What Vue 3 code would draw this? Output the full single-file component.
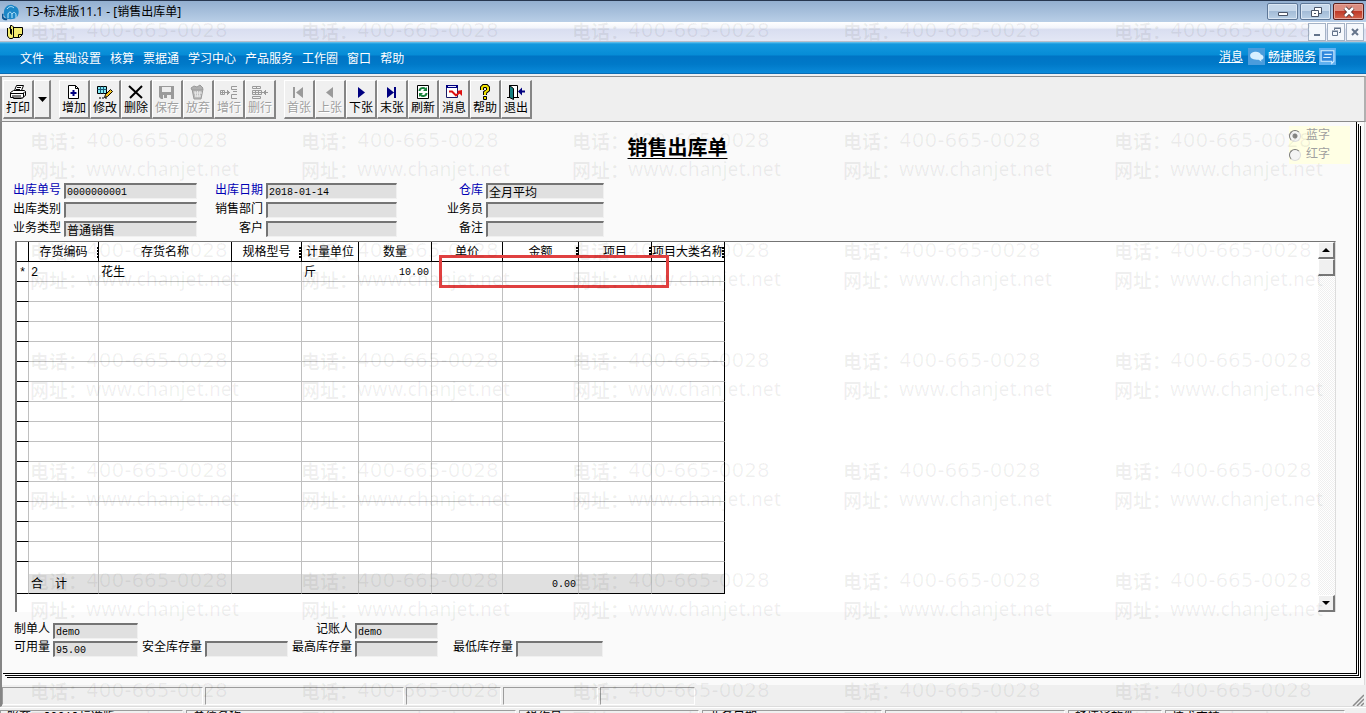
<script setup>
const menus = ['文件', '基础设置', '核算', '票据通', '学习中心', '产品服务', '工作圈', '窗口', '帮助']

const NAVY = '#000080'
const GRAY = '#9a9a9a'

const editTools = [
  { label: '增加', shapes: [
    { d: 'M3.5 1.5h7l3 3v10h-10z', fill: '#fff', stroke: '#000' },
    { d: 'M10.5 1.5v3h3', stroke: '#000' },
    { d: 'M8.5 6v6M5.5 9h6', stroke: NAVY, w: 2 }] },
  { label: '修改', shapes: [
    { d: 'M1.5 2.5h9v7h-9z', fill: '#7fe8f4', stroke: '#000' },
    { d: 'M1.5 5.5h9M4.5 2.5v7M7.5 2.5v7', stroke: '#1a5a78' },
    { d: 'M14.5 5.5l2 2-5 5-3 1 1-3z', fill: '#f0c020', stroke: '#000' },
    { d: 'M3 14h2M6 14h2M9 14h2', stroke: '#000' }] },
  { label: '删除', shapes: [
    { d: 'M2 2l13 12', stroke: '#000', w: 2 },
    { d: 'M15 2L3 14', stroke: '#000', w: 2 }] },
  { label: '保存', off: true, shapes: [
    { d: 'M1 2h15v13H3l-2-2z', fill: GRAY },
    { d: 'M4 3h9v5H4z', fill: '#ededed' },
    { d: 'M5 11h8v4H5z', fill: '#ededed' },
    { d: 'M6 11h3v3H6z', fill: GRAY }] },
  { label: '放弃', off: true, shapes: [
    { d: 'M3 5h11l-2 10H5z', fill: '#bcbcbc', stroke: GRAY },
    { d: 'M2 4l3-2 3 1 3-2 3 3-1 2H3z', fill: '#b0b0b0', stroke: GRAY },
    { d: 'M6 7l1 6M11 7l-1 6M8.5 7v6M5 9h8M6 12h6', stroke: '#e8e8e8' }] },
  { label: '增行', off: true, shapes: [
    { d: 'M.5 6.5h4v4h-4zM.5 8.5h4M2.5 6.5v4', stroke: GRAY },
    { d: 'M5 8.5h5M7.5 6v5M8.5 7v3', stroke: GRAY },
    { d: 'M17 2.5h-5.500v3h5.500M17 7.500h-4M17 10.500h-5.500v4h5.500', stroke: GRAY }] },
  { label: '删行', off: true, shapes: [
    { d: 'M1.500 2.500h8v2h-8zM5.500 2.500v2', stroke: GRAY },
    { d: 'M1.500 6.500h9v4h-9zM1.500 8.500h9M4.500 6.500v4M7.500 6.500v4', stroke: GRAY },
    { d: 'M1.500 12.500h8v2h-8z', stroke: GRAY },
    { d: 'M11 8.500h6M14.500 6v5M13.500 7v3', stroke: GRAY }] }
]

const navTools = [
  { label: '首张', off: true, shapes: [{ d: 'M3 3h2v11H3zM13 3v11L6 8.500z', fill: GRAY }] },
  { label: '上张', off: true, shapes: [{ d: 'M12 3v11L5 8.500z', fill: GRAY }] },
  { label: '下张', shapes: [{ d: 'M6 3v11l7-5.500z', fill: NAVY }] },
  { label: '末张', shapes: [{ d: 'M4 3v11l7-5.500zM11 3h2v11h-2z', fill: NAVY }] },
  { label: '刷新', shapes: [
    { d: 'M3.500 1.500h11v13h-11z', fill: '#fff', stroke: '#000' },
    { d: 'M5.500 7c0-3 4-4 6-2M12.500 9c0 3-4 4-6 2', stroke: '#16803a', w: 2 },
    { d: 'M13 3v4H9zM5 13V9h4z', fill: '#16803a' }] },
  { label: '消息', shapes: [
    { d: 'M1.500 1.500h11v12h-11z', fill: '#fff', stroke: '#1a1a66' },
    { d: 'M1 1h12v3H1z', fill: NAVY },
    { d: 'M3 2h8v1H3z', fill: '#e8e8ff' },
    { d: 'M4 7.500h3l4 4 4-3.500', stroke: '#dd1111', w: 2 },
    { d: 'M17 6v6l-5-5z', fill: '#dd1111' }] },
  { label: '帮助', shapes: [
    { d: 'M6 6V3.500l1.500-1.500h3L12 3.500V6L9 8.500V11', stroke: '#000', w: 4 },
    { d: 'M6 6V3.500l1.500-1.500h3L12 3.500V6L9 8.500V11', stroke: '#f0e000', w: 2 },
    { d: 'M7.500 12.500h3v3h-3z', fill: '#f0e000', stroke: '#000' }] },
  { label: '退出', shapes: [
    { d: 'M2.500 1.500h8v12h-8z', fill: '#fff', stroke: '#000' },
    { d: 'M2.500 1.500l4 3v11l-4-2z', fill: '#158080', stroke: '#000' },
    { d: 'M0 13.500h3M7 13.500h5', stroke: '#000' },
    { d: 'M13 7.500h5', stroke: NAVY, w: 2 },
    { d: 'M11 7.500l4-4v8z', fill: NAVY }] }
]

const headFields = [
  { id: 'billNo', label: '出库单号', value: '0000000001', key: true },
  { id: 'billDate', label: '出库日期', value: '2018-01-14', key: true },
  { id: 'store', label: '仓库', value: '全月平均', key: true, cjk: true },
  { id: 'category', label: '出库类别', value: '' },
  { id: 'dept', label: '销售部门', value: '' },
  { id: 'clerk', label: '业务员', value: '' },
  { id: 'bizType', label: '业务类型', value: '普通销售', cjk: true },
  { id: 'customer', label: '客户', value: '' },
  { id: 'remark', label: '备注', value: '' }
]

const footFields = [
  { id: 'maker', label: '制单人', value: 'demo' },
  { id: 'booker', label: '记账人', value: 'demo', skip: true },
  { id: 'available', label: '可用量', value: '95.00', start: true },
  { id: 'safe', label: '安全库存量', value: '' },
  { id: 'highest', label: '最高库存量', value: '' },
  { id: 'lowest', label: '最低库存量', value: '' }
]

const columns = [
  { name: '', cls: 'c-mark' },
  { name: '存货编码', cls: 'c-code', cut: true },
  { name: '存货名称', cls: 'c-name' },
  { name: '规格型号', cls: 'c-spec', cut: true },
  { name: '计量单位', cls: 'c-unit' },
  { name: '数量', cls: 'c-qty' },
  { name: '单价', cls: 'c-price' },
  { name: '金额', cls: 'c-sum', cut: true },
  { name: '项目', cls: 'c-item', cut: true },
  { name: '项目大类名称', cls: 'c-group', cut: true }
]
const firstRow = ['*', '2', '花生', '', '斤', '10.00', '', '', '', '']
const totalRow = ['', '合　计', '', '', '', '', '', '0.00', '', '']
const rows = [firstRow, ...Array.from({ length: 14 }, () => Array(10).fill(''))]

const statusCells = ['s1', 's2', 's3', 's3', 's3']
const taskCells = [
  { cls: 't1', text: '账套：[001]标准版' },
  { cls: 't2', text: '单位名称：' },
  { cls: 't3', text: '操作员：' },
  { cls: 't3', text: '业务日期' },
  { cls: 't3', text: '' },
  { cls: 't4', text: '畅捷通软件' },
  { cls: 't3', text: '技术支持' }
]
</script>

<template>
  <div class="app">
    <header class="titlebar">
      <svg class="logo" viewBox="0 0 18 18">
        <path d="M2 9C2 3 9 0 12 3c5 1 6 7 3 11-3 3-10 3-12 0-1-2-2-3-1-5z" fill="#1b86c6" />
        <path d="M5 6c2-3 5-3 7-1M6 15v-4c1-3 4-2 4 1v3M10 11c2-3 4-1 4 1v3" fill="none" stroke="#bfeaff" />
        <path d="M1 11c-2 3 1 6 4 5" fill="none" stroke="#0b5591" stroke-width="2" />
      </svg>
      <h1>T3-标准版11.1 - [销售出库单]</h1>
      <div class="winbtns">
        <button type="button" aria-label="最小化">
          <svg viewBox="0 0 14 12"><path d="M2.500 6.500h9v3h-9z" fill="#fff" stroke="#4a5568" /></svg>
        </button>
        <button type="button" aria-label="还原">
          <svg viewBox="0 0 14 12"><path d="M5.500 1.500h7v6h-7z" fill="#fff" stroke="#4a5568" /><path d="M2.500 4.500h7v6h-7z" fill="#fff" stroke="#4a5568" /><path d="M5 7h2v1H5z" fill="#4a5568" /></svg>
        </button>
        <button type="button" class="close" aria-label="关闭">
          <svg viewBox="0 0 14 12"><path d="M3 2l8 8M11 2l-8 8" stroke="#4a2a2a" stroke-width="4" /><path d="M3 2l8 8M11 2l-8 8" stroke="#fff" stroke-width="2.500" /></svg>
        </button>
      </div>
    </header>

    <div class="mdibar">
      <svg class="note" viewBox="0 0 16 16">
        <path d="M2.500 3.500h13v7l-3 3h-10z" fill="#f4ec70" stroke="#000" />
        <path d="M15 10.500h-3.500v3" fill="none" stroke="#000" />
        <path d="M.500 4v8l2 2.500h3l1-1.500V3L5 1.500H3.500v8l1 1V5" fill="#f4ec70" stroke="#000" />
      </svg>
      <div class="mdibtns">
        <button type="button" aria-label="最小化窗口"><svg viewBox="0 0 12 12"><path d="M3 9h6" stroke="#64748b" stroke-width="2" /></svg></button>
        <button type="button" aria-label="还原窗口"><svg viewBox="0 0 12 12"><path d="M4.500 4V2.500h6v4H9M2.500 5.500h5v4h-5zM2 5h6M4 2h7" fill="none" stroke="#64748b" /></svg></button>
        <button type="button" aria-label="关闭窗口"><svg viewBox="0 0 12 12"><path d="M3 3l6 6M9 3l-6 6" stroke="#64748b" stroke-width="2" /></svg></button>
      </div>
    </div>

    <nav class="menubar">
      <div class="menus">
        <button v-for="m in menus" :key="m" type="button">{{ m }}</button>
      </div>
      <div class="links">
        <a href="#">消息</a>
        <svg viewBox="0 0 16 16"><path d="M0 0h16v16H0z" fill="#4a9cdc" /><path d="M2 7c0-4 9-5 10-1 4 1 3 5 0 5l1 2-3-2c-5 0-8-1-8-4z" fill="#d8efff" /></svg>
        <a href="#">畅捷服务</a>
        <svg viewBox="0 0 16 16"><path d="M0 0h16v16H0z" fill="#5fb0f0" /><path d="M2 2.500h12v10l-2 2v-2H2z" fill="#2f86dc" stroke="#d8efff" /><path d="M5 6h7M4 9h7" stroke="#d8efff" /></svg>
      </div>
    </nav>

    <div class="toolbar">
      <div class="group">
        <button type="button" class="tool">
          <svg viewBox="0 0 18 16">
            <path d="M5.500 6.500l2-5h7l-2 5" fill="#fff" stroke="#000" />
            <path d="M8 3.500h4M7 5.500h4" stroke="#000" />
            <path d="M1.500 8.500l3-2h11l1 1v4l-3 2h-12z" fill="#fff" stroke="#000" />
            <path d="M2 9.500h12l2-2M14.500 9v4M3 12h9" fill="none" stroke="#000" />
            <path d="M4.500 13.500v1h8l2-1" fill="#fff" stroke="#000" />
          </svg>
          <span>打印</span>
        </button>
        <button type="button" class="drop" aria-label="打印选项">
          <svg viewBox="0 0 9 5"><path d="M0 0h9L4.500 5z" fill="#000" /></svg>
        </button>
      </div>
      <div v-for="(g, gi) in [editTools, navTools]" :key="gi" class="group">
        <button v-for="t in g" :key="t.label" type="button" class="tool" :disabled="t.off">
          <svg viewBox="0 0 18 16">
            <path v-for="(s, i) in t.shapes" :key="i" :d="s.d" :fill="s.fill || 'none'" :stroke="s.stroke || 'none'" :stroke-width="s.w || 1" />
          </svg>
          <span>{{ t.label }}</span>
        </button>
      </div>
    </div>

    <main class="desk">
      <section class="paper">
        <div class="heading">
          <h2>销售出库单</h2>
          <fieldset class="colors" disabled>
            <label><input type="radio" name="ink" checked />蓝字</label>
            <label><input type="radio" name="ink" />红字</label>
          </fieldset>
        </div>

        <div class="fields head">
          <template v-for="f in headFields" :key="f.id">
            <label :for="f.id" :class="{ key: f.key }">{{ f.label }}</label>
            <input :id="f.id" type="text" :value="f.value" :class="{ cjk: f.cjk }" readonly />
          </template>
        </div>

        <div class="gridbox">
          <div class="sheet">
            <table>
              <colgroup><col v-for="c in columns" :key="c.cls" :class="c.cls" /></colgroup>
              <thead>
                <tr><th v-for="c in columns" :key="c.cls" :class="{ cut: c.cut }"><span>{{ c.name }}</span></th></tr>
              </thead>
              <tbody>
                <tr v-for="(r, ri) in rows" :key="ri">
                  <td v-for="(v, ci) in r" :key="ci" :class="{ num: ci === 5, mark: ci === 0 }">{{ v }}</td>
                </tr>
                <tr class="rest"><td v-for="c in columns" :key="c.cls"></td></tr>
              </tbody>
              <tfoot>
                <tr><td v-for="(v, ci) in totalRow" :key="ci" :class="{ num: ci === 7 }">{{ v }}</td></tr>
              </tfoot>
            </table>
            <div class="callout"></div>
          </div>
          <div class="scroll">
            <button type="button" aria-label="向上"><svg viewBox="0 0 8 4"><path d="M0 4h8L4 0z" /></svg></button>
            <div class="thumb"></div>
            <button type="button" class="down" aria-label="向下"><svg viewBox="0 0 8 4"><path d="M0 0h8L4 4z" /></svg></button>
          </div>
        </div>

        <div class="fields foot">
          <template v-for="f in footFields" :key="f.id">
            <label :for="f.id" :class="{ skip: f.skip, start: f.start }">{{ f.label }}</label>
            <input :id="f.id" type="text" :value="f.value" readonly />
          </template>
        </div>
      </section>
    </main>

    <div class="status">
      <div v-for="(s, i) in statusCells" :key="i" class="cell" :class="s"></div>
      <svg class="grip" viewBox="0 0 12 12"><path d="M1 12L12 1M5 12l7-7M9 12l3-3" stroke="#8a8a8a" stroke-width="1.500" /></svg>
    </div>
    <footer class="task">
      <div v-for="(t, i) in taskCells" :key="i" class="cell" :class="t.cls">{{ t.text }}</div>
    </footer>

    <div class="marks" aria-hidden="true">
      <div v-for="n in 35" :key="n" class="stamp">
        <p><span>电话：</span><b class="tel">400-665-0028</b></p>
        <p><span>网址：</span><b>www.chanjet.net</b></p>
      </div>
    </div>
  </div>
</template>

<style>
body { margin: 0; overflow: hidden; background: #f0f0f0; }
</style>

<style scoped>
* { box-sizing: border-box; }
.app {
  position: relative;
  height: 100vh;
  overflow: hidden;
  display: flex;
  flex-direction: column;
  background: #f0f0f0;
  color: #000;
  font: 12px/14px "Liberation Mono", "Noto Sans CJK SC", sans-serif;
}
.app > * { flex: none; }
button { font: inherit; padding: 0; margin: 0; border: 0; background: none; color: inherit; }
svg { display: block; }

.titlebar {
  display: flex;
  align-items: center;
  height: 22px;
  padding: 0 2px;
  border-top: 1px solid #26364f;
  background: linear-gradient(#93afd0, #b9cfe7);
}
.logo { width: 18px; height: 18px; }
.titlebar h1 { margin: 0 auto 0 6px; font: 12px/18px "Noto Sans", "Noto Sans CJK SC", sans-serif; }
.winbtns, .mdibtns { display: flex; gap: 2px; }
.winbtns button {
  width: 31px;
  height: 17px;
  display: grid;
  place-items: center;
  border: 1px solid #5d7797;
  border-radius: 2px;
  box-shadow: inset 0 0 0 1px #dbe7f4;
  background: linear-gradient(#c5d7ea 50%, #a3bcd7 50%, #bad0e6);
}
.winbtns svg { width: 14px; height: 12px; }
.winbtns .close { border-color: #5a1f1c; box-shadow: inset 0 0 0 1px #e6a79c; background: linear-gradient(#dc8d80 50%, #bf3a28 50%, #d4644c); }

.mdibar {
  display: flex;
  align-items: center;
  justify-content: space-between;
  height: 20px;
  padding: 0 2px 0 7px;
  border-bottom: 1px solid #b9bfcb;
  background: linear-gradient(#fff, #f3f5fb 30%, #d9def0 40%, #e3e7f5);
}
.note { width: 16px; height: 16px; }
.mdibtns { gap: 1px; }
.mdibtns button { width: 18px; height: 18px; display: grid; place-items: center; border: 1px solid #a5b3c6; background: #f5f8fc; }
.mdibtns svg { width: 12px; height: 12px; }

.menubar {
  position: relative;
  z-index: 1;
  display: flex;
  justify-content: space-between;
  height: 32px;
  padding: 0 30px 0 20px;
  border-bottom: 1px solid #0a6cb5;
  background: linear-gradient(#6ec6ee 0, #1398de 2px, #068cd6 13px, #0074c4 14px, #0079c8 22px, #0a8ad9);
  color: #fff;
}
.menus { display: flex; gap: 9px; padding-top: 5px; }
.links { display: flex; align-items: center; gap: 3px; padding-bottom: 2px; }
.links a { color: #fff; padding-top: 2px; }
.links svg { width: 17px; height: 17px; }
.links svg:first-of-type { margin-left: 2px; }

.toolbar {
  display: flex;
  gap: 8px;
  height: 46px;
  margin-top: 2px;
  padding: 3px 1px 2px;
  border: solid #8b8b8b;
  border-width: 1px 2px 1px 2px;
  border-right-color: #b0b0b0;
  background: #efefef;
}
.group { display: flex; }
.tool, .drop {
  width: 31px;
  height: 39px;
  border: solid;
  border-width: 1px 2px 2px 1px;
  border-color: #fff #858585 #858585 #fff;
  background: #f0f0f0;
}
.tool { display: flex; flex-direction: column; align-items: center; gap: 1px; padding-top: 3px; }
.tool svg { width: 18px; height: 16px; }
.tool span { line-height: 16px; white-space: nowrap; }
.tool:disabled { color: #a0a0a0; text-shadow: 1px 1px #fff; }
.drop { width: 17px; display: grid; place-items: center; }
.drop svg { width: 9px; height: 5px; }

.desk { border-left: 2px solid #858585; padding: 0 7px 11px 1px; background: #fafafa; border-right: 1px solid #dcdcdc; margin-right: 1px; }
.paper {
  padding-bottom: 14px;
  border: solid #000;
  border-width: 0 1px 1px 0;
  background: #fafafa;
  box-shadow: 1px 1px #fff, 2px 2px #000, 3px 3px #fff, 4px 4px #000;
}
.heading { display: grid; grid-template-columns: 1fr auto 1fr; padding: 4px 6px 0 2px; }
.heading h2 { grid-column: 2; align-self: end; margin: 0; font: bold 20px/24px "Noto Sans CJK SC", sans-serif; text-decoration: underline; text-decoration-thickness: 1px; text-underline-offset: 3px; padding-bottom: 5px; }
.colors { justify-self: end; width: 61px; margin: 0; padding: 0; border: 0; background: #ffffe4; color: #a0a0a0; }
.colors label { display: flex; align-items: center; gap: 5px; height: 19px; }
.colors input {
  appearance: none;
  width: 12px;
  height: 12px;
  margin: 0;
  border: 1px solid;
  border-color: #777 #ddd #ddd #777;
  border-radius: 50%;
  background: #f4f4f4;
}
.colors input:checked { background: radial-gradient(circle, #888 2px, #f4f4f4 3px); }

.fields { display: grid; column-gap: 3px; }
.fields label { text-align: right; line-height: 14px; white-space: nowrap; }
.fields .key { color: #0000b4; }
.fields input {
  width: 100%;
  height: 16px;
  min-width: 0;
  padding: 1px 0 0 1px;
  border: solid;
  border-width: 2px 1px 1px 2px;
  border-color: #747474 #f0f0f0 #f0f0f0 #747474;
  border-radius: 0;
  background: #e0e0e0;
  color: #000;
  font: 10px/12px "Liberation Mono", "Noto Sans CJK SC", monospace;
  outline: 0;
}
.fields input.cjk { padding-top: 0; font-size: 12px; }
.head { grid-template-columns: 48px 133px 63px 131px 83px 118px; grid-auto-rows: 19px; padding: 19px 0 0 10px; }
.head label { padding-top: 1px; }
.foot { grid-template-columns: 36px 85px 61px 83px 61px 83px 72px 87px; grid-auto-rows: 18px; padding: 11px 0 0 11px; }
.foot .skip { grid-column: 5; }
.foot .start { grid-column: 1; }

.gridbox {
  display: flex;
  justify-content: space-between;
  height: 371px;
  margin: 1px 20px 0 12px;
  border: solid #747474;
  border-width: 1px 0 0 2px;
  border-right: 1px solid #ddd;
  background: #fff;
}
.sheet { position: relative; }
table { width: 708px; table-layout: fixed; border-collapse: separate; border-spacing: 0; }
.c-mark { width: 12px; }
.c-code, .c-spec { width: 70px; }
.c-name { width: 133px; }
.c-unit { width: 57px; }
.c-qty, .c-item, .c-group { width: 73px; }
.c-price { width: 71px; }
.c-sum { width: 76px; }
th, td { height: 20px; padding: 3px 2px 0; border: solid #c0c0c0; border-width: 0 1px 1px 0; line-height: 16px; white-space: nowrap; overflow: hidden; text-align: left; }
th { position: relative; padding: 3px 0 0; border-color: #000; font-weight: normal; text-align: center; }
th.cut::after { content: ""; position: absolute; right: 0; top: 5px; width: 2px; height: 11px; background: repeating-linear-gradient(#000 0 2px, #fff 2px 3px); }
th:nth-child(2)::after { width: 1px; }
td:first-child { border-bottom-color: #000; }
td:last-child { border-right-color: #000; }
td.mark { padding: 3px 0 0; text-align: center; }
.num { text-align: right; font-size: 10px; }
.rest td { height: 12px; padding: 0; border-bottom: 0; line-height: 10px; }
tfoot td { background: #e0e0e0; border-bottom-color: #000; }
tfoot td:first-child { background: #fff; }
.callout { position: absolute; left: 422px; top: 13px; width: 230px; height: 33px; border: 3px solid #e04040; }

.scroll { display: flex; flex-direction: column; width: 17px; background: repeating-conic-gradient(#fff 0 25%, #efefef 0 50%) 0 0 / 2px 2px; }
.scroll button, .thumb {
  width: 17px;
  height: 17px;
  display: grid;
  place-items: center;
  border: solid;
  border-width: 1px 2px 2px 1px;
  border-color: #fff #777 #777 #fff;
  background: #f0f0f0;
}
.scroll svg { width: 8px; height: 4px; }
.scroll .down { margin-top: auto; }

.status { display: flex; gap: 2px; height: 22px; padding: 2px 1px 1px 0; border-left: 2px solid #858585; border-bottom: 1px solid #dcdcdc; background: #efefef; }
.cell { border: solid; border-width: 1px; border-color: #9c9c9c #fff #fff #9c9c9c; flex: none; overflow: hidden; white-space: nowrap; }
.s1 { width: 201px; }
.s2 { width: 199px; }
.s3 { width: 95px; }
.grip { width: 12px; height: 12px; margin: 7px 1px 0 auto; }
.task { display: flex; gap: 3px; height: 24px; padding-top: 2px; border-top: 1px solid #fff; background: #f0f0f0; }
.task .cell { padding: 0 6px; }
.t1 { width: 183px; }
.t2 { width: 330px; }
.t3 { width: 180px; }
.t4 { width: 94px; }

.marks {
  position: absolute;
  top: 16px;
  left: 30px;
  display: grid;
  grid-template-columns: repeat(5, 271px);
  grid-auto-rows: 110px;
  color: rgba(0, 0, 0, 0.06);
  font: 19px/29px "Noto Sans", "Noto Sans CJK SC", sans-serif;
  pointer-events: none;
}
.stamp p { display: flex; margin: 0; white-space: nowrap; }
.stamp span { width: 56px; font-family: "Noto Sans CJK SC", sans-serif; font-weight: bold; }
.stamp b { font-weight: 500; }
.stamp .tel { font-family: "DejaVu Sans", sans-serif; font-size: 20px; font-weight: normal; }
</style>
